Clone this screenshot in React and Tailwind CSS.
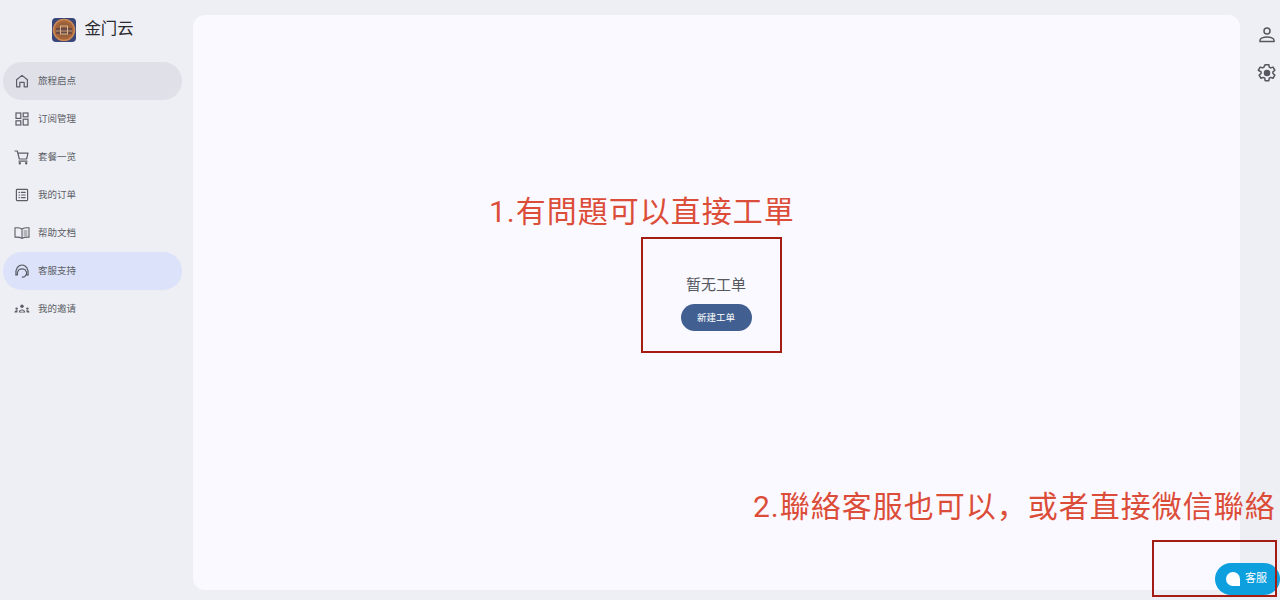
import React from "react";

const stroke = { fill: "none", stroke: "#5b5e66", strokeLinecap: "round", strokeLinejoin: "round" };

const Icons = {
  home: (
    <svg width="16" height="16" viewBox="0 0 16 16" {...stroke} strokeWidth="1.2">
      <path d="M2.600 6.800 8 2.400l5.400 4.400V13.800h-3.200V9.400H5.800V13.800H2.600z" />
    </svg>
  ),
  grid: (
    <svg width="16" height="16" viewBox="0 0 16 16" {...stroke} strokeWidth="1.200" strokeLinejoin="miter">
      <rect x="2" y="2" width="4.800" height="5.400" />
      <rect x="9.200" y="2" width="4.800" height="3.800" />
      <rect x="2" y="9.800" width="4.800" height="4.200" />
      <rect x="9.200" y="8.200" width="4.800" height="5.800" />
    </svg>
  ),
  cart: (
    <svg width="16" height="16" viewBox="0 0 16 16" {...stroke} strokeWidth="1.200">
      <path d="M1 2h2.300l2 8h7.300l1.400-5.800H3.800" />
      <path d="M5 12.200h8" />
      <circle cx="5.800" cy="14.200" r=".6" />
      <circle cx="12.200" cy="14.200" r=".6" />
    </svg>
  ),
  list: (
    <svg width="16" height="16" viewBox="0 0 16 16" {...stroke} strokeWidth="1.200">
      <rect x="2.400" y="2.400" width="11.200" height="11.200" rx=".8" />
      <path d="M5 5.400h.5M5 8h.5M5 10.600h.5M7.400 5.400h3.800M7.400 8h3.800M7.400 10.600h3.800" />
    </svg>
  ),
  book: (
    <svg width="16" height="16" viewBox="0 0 16 16" {...stroke} strokeWidth="1.100">
      <path d="M8 4C6.400 3 4 2.600 1 2.800v9.400c3-.2 5.400.2 7 1.200 1.600-1 4-1.400 7-1.200V2.800C12 2.600 9.600 3 8 4zM8 4v9.400" />
      <path d="M10 6h3M10 8h3M10 10h3" strokeWidth=".8" />
    </svg>
  ),
  headset: (
    <svg width="16" height="16" viewBox="0 0 16 16" {...stroke} strokeWidth="1.200">
      <path d="M2 11.800C1 6.400 4 2 8 2s7 4.400 6 9.800" />
      <path d="M2 11.800h1.400c-.3-2 .2-3.800 1.400-5 1.800-1 4.600-1 6.400 0 1.200 1.200 1.700 3 1.400 5H14" />
      <path d="M11.800 11.800c-.2 1.600-1.600 2.400-3.400 2.400" />
    </svg>
  ),
  people: (
    <svg width="16" height="16" viewBox="0 0 16 16" fill="#5b5e66">
      <circle cx="8" cy="5.200" r="1.700" />
      <path d="M4.800 11.600c0-2 1.400-3.200 3.200-3.200s3.200 1.200 3.200 3.200zM6 10.700h4c-.3-.8-1-1.300-2-1.300s-1.700.5-2 1.300z" fillRule="evenodd" />
      <circle cx="2.600" cy="7.600" r="1.200" />
      <circle cx="13.400" cy="7.600" r="1.200" />
      <path d="M.4 11.600c0-1.500 1-2.400 2.200-2.400.5 0 .9.100 1.300.4-.4.500-.6 1.200-.6 2zM15.600 11.600c0-1.500-1-2.400-2.200-2.400-.5 0-.9.100-1.300.4.400.5.600 1.200.6 2z" />
    </svg>
  ),
};

const nav = [
  ["home", "旅程启点", "bg-[#dfe0e8]"],
  ["grid", "订阅管理", ""],
  ["cart", "套餐一览", ""],
  ["list", "我的订单", ""],
  ["book", "帮助文档", ""],
  ["headset", "客服支持", "bg-[#dbe2f9]"],
  ["people", "我的邀请", ""],
];

function Logo() {
  return (
    <svg width="24" height="24" viewBox="0 0 24 24">
      <rect width="24" height="24" rx="4" fill="#3a4678" />
      <circle cx="12" cy="12" r="10.500" fill="#a9643a" />
      <circle cx="12" cy="12" r="10.500" fill="none" stroke="#c98a55" strokeWidth="1.500" />
      <circle cx="12" cy="12" r="7.500" fill="#96603c" />
      <rect x="4" y="10" width="16" height="6" fill="#6b4a45" />
      <rect x="8.500" y="8" width="7" height="8" fill="none" stroke="#d9b48c" strokeWidth="1" />
      <path d="M4 13h16" stroke="#d9b48c" strokeWidth=".8" />
    </svg>
  );
}

export default function App() {
  return (
    <div className="relative flex h-[600px] w-[1280px] overflow-hidden bg-[#eeeff4] font-['Roboto','Noto_Sans_CJK_SC',sans-serif] text-[#5b5e66]">
      <aside className="flex w-[193px] shrink-0 flex-col">
        <div className="flex h-[62px] items-center justify-center gap-2 pb-[5px] pr-[7px] pt-[2px]">
          <Logo />
          <span className="text-[16.400px] text-[#2a2b30]">金门云</span>
        </div>
        <nav className="flex flex-col pl-[3px] pr-[11px]">
          {nav.map(([icon, label, bg]) => (
            <div key={label} className={`flex h-[38px] items-center gap-[8px] rounded-[19px] pl-[11px] ${bg}`}>
              <span className="flex h-4 w-[16px] items-center justify-center">{Icons[icon]}</span>
              <span className="text-[9.500px] leading-none">{label}</span>
            </div>
          ))}
        </nav>
      </aside>

      <main className="mb-[10px] mt-[15px] flex w-[1047px] shrink-0 flex-col items-center rounded-xl bg-[#faf9ff] pr-[1px] pt-[260px]">
        <p className="text-[15px] leading-5 text-[#55585f]">暂无工单</p>
        <button className="mt-[9px] h-[27px] w-[71px] rounded-[14px] bg-[#415f91] pt-[1px] text-[9.500px] text-white">新建工单</button>
      </main>

      <div className="flex flex-1 flex-col items-center gap-[18px] pt-[25px] pl-[14px]">
        <svg width="20" height="20" viewBox="0 0 20 20" fill="none" stroke="#55585f" strokeWidth="1.500">
          <circle cx="10" cy="6" r="3" />
          <path d="M3 16.500v-1.200c0-2 3.500-3.300 7-3.300s7 1.300 7 3.300v1.200z" />
        </svg>
        <svg width="20" height="20" viewBox="0 0 24 24" fill="none" stroke="#55585f" strokeWidth="1.800" strokeLinejoin="round">
          <path d="M9.800 2h4.400l.5 2.900 1.700 1 2.800-1 2.200 3.800-2.300 1.900v2l2.300 1.900-2.200 3.800-2.800-1-1.700 1-.5 2.900H9.800l-.5-2.900-1.700-1-2.800 1-2.200-3.800 2.300-1.900v-2L1.600 8.700l2.200-3.800 2.800 1 1.700-1z" />
          <circle cx="12" cy="12" r="3" fill="#55585f" />
        </svg>
      </div>

      {/* Annotations over the page */}
      <div className="absolute left-[489px] top-[192px] font-['Roboto','Noto_Sans_CJK_SC',sans-serif] text-[30px] font-normal leading-10 tracking-[1px] text-[#dc4d39] whitespace-nowrap">1.有問題可以直接工單</div>
      <div className="absolute left-[641px] top-[237px] h-[116px] w-[141px] border-[2.500px] border-[#a51d12]" />
      <div className="absolute left-[753px] top-[487px] font-['Roboto','Noto_Sans_CJK_SC',sans-serif] text-[30px] font-normal leading-10 tracking-[1px] text-[#dc4d39] whitespace-nowrap">2.聯絡客服也可以，或者直接微信聯絡</div>

      <div className="absolute left-[1215px] top-[563px] flex h-[32px] w-[65px] items-center rounded-[16px] bg-[#0e9fdf] pl-[11px]">
        <span className="h-[14px] w-[14px] rounded-full rounded-br-[3px] bg-white" />
        <span className="ml-[5px] pt-[1px] text-[11px] text-white">客服</span>
      </div>
      <div className="absolute left-[1152px] top-[540px] h-[57px] w-[125px] border-[2.500px] border-[#a51d12]" />
    </div>
  );
}
